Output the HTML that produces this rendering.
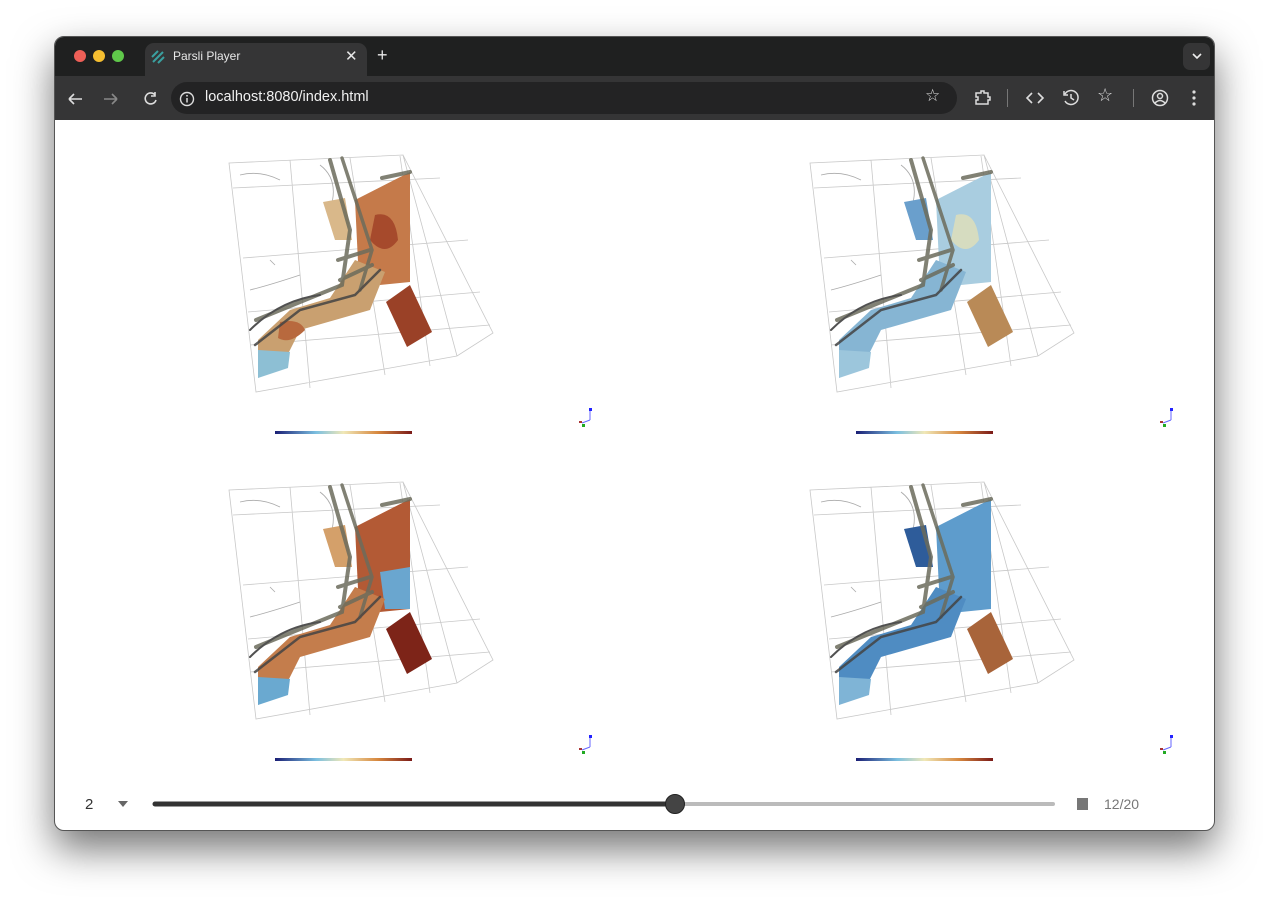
<!DOCTYPE html>
<html><head><meta charset="utf-8"><style>
body{margin:0;width:1269px;height:902px;background:#fff;font-family:"Liberation Sans",sans-serif;overflow:hidden;position:relative}
.win{position:absolute;left:54px;top:36px;width:1161px;height:795px;border-radius:10px;overflow:hidden;background:#fff;box-shadow:0 18px 40px rgba(0,0,0,.55);border:1px solid #555;box-sizing:border-box}
.tabs{position:absolute;left:0;top:0;width:100%;height:39px;background:#1f2020}
.tool{position:absolute;left:0;top:39px;width:100%;height:44px;background:#353536}
.dot{position:absolute;top:13px;width:12px;height:12px;border-radius:50%}
.tab{position:absolute;left:90px;top:6px;width:222px;height:33px;background:#353536;border-radius:9px 9px 0 0}
.url{position:absolute;left:116px;top:6px;width:786px;height:32px;background:#232324;border-radius:16px}
.t{position:absolute;color:#e8e8e8;font-size:13px}
</style></head><body>
<div class="win">
 <div class="tabs">
  <div class="dot" style="left:19px;background:#ee5f57"></div>
  <div class="dot" style="left:38px;background:#f5be30"></div>
  <div class="dot" style="left:57px;background:#5fc84a"></div>
  <div class="tab"></div>
  <svg style="position:absolute;left:95px;top:12px" width="16" height="16"><path d="M3 13 L13 3 M2 8 L8 2 M8 14 L14 8" stroke="#3aa0a0" stroke-width="2" fill="none"/></svg>
  <div class="t" style="left:118px;top:12px;font-size:12px">Parsli Player</div>
  <div class="t" style="left:290px;top:10px;font-size:15px">✕</div>
  <div class="t" style="left:322px;top:8px;font-size:18px">+</div>
  <div style="position:absolute;left:1128px;top:6px;width:27px;height:27px;border-radius:7px;background:#353536"></div>
  <svg style="position:absolute;left:1136px;top:14px" width="12" height="10"><path d="M2 3 L6 7 L10 3" stroke="#eee" stroke-width="1.6" fill="none"/></svg>
 </div>
 <div class="tool">
  <svg style="position:absolute;left:10px;top:12px" width="220" height="22" fill="none" stroke-width="1.6">
   <path d="M4 11 H17 M4 11 L9 6 M4 11 L9 16" stroke="#ddd"/>
   <path d="M39 11 H52 M52 11 L47 6 M52 11 L47 16" stroke="#888"/>
   <path d="M90 7 A5.5 5.5 0 1 0 91 12 M90 4 V8 H86" stroke="#ddd"/>
  </svg>
  <div class="url"></div>
  <svg style="position:absolute;left:124px;top:15px" width="16" height="16"><circle cx="8" cy="8" r="6.5" stroke="#ddd" stroke-width="1.4" fill="none"/><path d="M8 7 V11.5" stroke="#ddd" stroke-width="1.5"/><circle cx="8" cy="4.8" r=".9" fill="#ddd"/></svg>
  <div class="t" style="left:150px;top:13px;font-size:14.5px;color:#f0f0f0;font-weight:500">localhost:8080/index.html</div>
  <div class="t" style="left:870px;top:10px;font-size:17px;color:#ddd">☆</div>
  <svg style="position:absolute;left:918px;top:12px" width="20" height="20" fill="none" stroke="#ddd" stroke-width="1.5"><path d="M3 5 H8 V3 H11 V5 H15 V9 H17 V12 H15 V16 H3 V12 H5 V9 H3 Z"/></svg>
  <div style="position:absolute;left:952px;top:13px;width:1px;height:18px;background:#777"></div>
  <svg style="position:absolute;left:970px;top:13px" width="20" height="18" fill="none" stroke="#ddd" stroke-width="1.6"><path d="M7 4 L2 9 L7 14 M13 4 L18 9 L13 14"/></svg>
  <svg style="position:absolute;left:1006px;top:12px" width="20" height="20" fill="none" stroke="#ddd" stroke-width="1.5"><path d="M4 6 A7 7 0 1 1 4 13 M3 3 V7 H7 M10 6 V10 L13 12"/></svg>
  <div class="t" style="left:1042px;top:9px;font-size:18px;color:#ddd">☆</div>
  <div style="position:absolute;left:1078px;top:13px;width:1px;height:18px;background:#777"></div>
  <svg style="position:absolute;left:1095px;top:12px" width="20" height="20" fill="none" stroke="#ddd" stroke-width="1.5"><circle cx="10" cy="10" r="7.5"/><circle cx="10" cy="8" r="2.5"/><path d="M5 15 Q10 10 15 15"/></svg>
  <svg style="position:absolute;left:1136px;top:12px" width="6" height="20" fill="#ddd"><circle cx="3" cy="4" r="1.6"/><circle cx="3" cy="10" r="1.6"/><circle cx="3" cy="16" r="1.6"/></svg>
 </div>
</div>
<svg style="position:absolute;left:0;top:0" width="1269" height="902">
<defs>
<linearGradient id="cb"><stop offset="0" stop-color="#1a1f75"/><stop offset=".3" stop-color="#7bbfe0"/><stop offset=".5" stop-color="#f0e8b8"/><stop offset=".75" stop-color="#d7883f"/><stop offset="1" stop-color="#7a1a18"/></linearGradient>
<g id="frame">
 <g fill="none" stroke="#c8c8c8" stroke-width="0.8">
  <path d="M229 163 L403 155 L493 333 L457 356 L256 392 Z M229 163 L256 392 M403 155 L457 356 M233 188 L440 178 M243 258 L468 240 M248 312 L480 292 M250 345 L490 325 M290 160 L310 388 M350 158 L385 375 M400 156 L430 366"/>
 </g>
 <path d="M240 175 Q260 170 280 180 M320 165 Q340 180 330 210 M270 260 L275 265 M250 290 Q270 285 300 275" stroke="#aaa" stroke-width=".8" fill="none"/>
 <rect x="275" y="431" width="137" height="3" fill="url(#cb)"/>
 <path d="M590 420 V410 M590 420 L582 423" stroke="#66f" stroke-width="1"/>
 <rect x="589" y="408" width="3" height="3" fill="#22f"/><rect x="582" y="424" width="3" height="3" fill="#2a2"/><rect x="579" y="421" width="3" height="2" fill="#a33"/>
</g>
<g id="bands" fill="none" stroke="#6c6c5c" stroke-linecap="round" opacity=".85">
 <path d="M330 160 L350 230 L342 285 L305 300 L256 320" stroke-width="4"/>
 <path d="M342 158 L372 250 L360 290" stroke-width="3.5"/>
 <path d="M382 178 L410 172" stroke-width="4"/>
 <path d="M255 345 L300 310 L355 295 L380 270" stroke-width="2.5" stroke="#444"/>
 <path d="M338 260 L370 250 M340 280 L372 265" stroke-width="4"/>
 <path d="M250 330 Q280 300 320 295" stroke-width="2" stroke="#333"/>
</g>
</defs>
<g>
 <use href="#frame"/>
 <path d="M355 200 L410 172 L410 282 L380 285 L358 262 Z" fill="#c57a4a"/>
 <path d="M375 215 Q395 210 398 240 Q385 258 370 240 Z" fill="#a64a2c"/>
 <path d="M323 202 L345 198 L352 240 L335 240 Z" fill="#d9b88a"/>
 <path d="M355 260 L385 272 L370 310 L300 330 L285 360 L258 378 L258 340 L290 310 L330 298 Z" fill="#c9a070"/>
 <path d="M280 322 Q300 318 305 330 Q290 345 278 338 Z" fill="#b8693e"/>
 <path d="M258 350 L290 352 L288 368 L258 378 Z" fill="#8dbfd4"/>
 <path d="M386 302 L410 285 L432 332 L407 347 Z" fill="#9a4127"/>
 <use href="#bands"/>
</g>
<g transform="translate(581,0)">
 <use href="#frame"/>
 <path d="M355 200 L410 172 L410 282 L380 285 L358 262 Z" fill="#a9cde0"/>
 <path d="M375 215 Q395 210 398 240 Q385 258 370 240 Z" fill="#d6dcc0"/>
 <path d="M323 202 L345 198 L352 240 L335 240 Z" fill="#6a9fcc"/>
 <path d="M355 260 L385 272 L370 310 L300 330 L285 360 L258 378 L258 340 L290 310 L330 298 Z" fill="#86b5d3"/>
 <path d="M258 350 L290 352 L288 368 L258 378 Z" fill="#9cc6dc"/>
 <path d="M386 302 L410 285 L432 332 L407 347 Z" fill="#b98a57"/>
 <use href="#bands"/>
</g>
<g transform="translate(0,327)">
 <use href="#frame"/>
 <path d="M355 200 L410 172 L410 282 L380 285 L358 262 Z" fill="#b35a35"/>
 <path d="M380 245 L410 240 L410 282 L385 282 Z" fill="#6aa6cf"/>
 <path d="M323 202 L345 198 L352 240 L335 240 Z" fill="#d4a06a"/>
 <path d="M355 260 L385 272 L370 310 L300 330 L285 360 L258 378 L258 340 L290 310 L330 298 Z" fill="#c47d4c"/>
 <path d="M258 350 L290 352 L288 368 L258 378 Z" fill="#6aa9d0"/>
 <path d="M386 302 L410 285 L432 332 L407 347 Z" fill="#7d2418"/>
 <use href="#bands"/>
</g>
<g transform="translate(581,327)">
 <use href="#frame"/>
 <path d="M355 200 L410 172 L410 282 L380 285 L358 262 Z" fill="#5e9ccc"/>
 <path d="M323 202 L345 198 L352 240 L335 240 Z" fill="#2e5c9a"/>
 <path d="M355 260 L385 272 L370 310 L300 330 L285 360 L258 378 L258 340 L290 310 L330 298 Z" fill="#4f8cc2"/>
 <path d="M258 350 L290 352 L288 368 L258 378 Z" fill="#7fb4d6"/>
 <path d="M386 302 L410 285 L432 332 L407 347 Z" fill="#a8643a"/>
 <use href="#bands"/>
</g>
<text x="85" y="809" font-family="Liberation Sans" font-size="15" fill="#333">2</text>
<path d="M118 801 L128 801 L123 807 Z" fill="#666"/>
<line x1="155" y1="804" x2="1053" y2="804" stroke="#bbb" stroke-width="4" stroke-linecap="round"/>
<line x1="155" y1="804" x2="675" y2="804" stroke="#333" stroke-width="5" stroke-linecap="round"/>
<circle cx="675" cy="804" r="9.5" fill="#444" stroke="#222"/>
<rect x="1077" y="798" width="11" height="12" fill="#777"/>
<text x="1104" y="809" font-family="Liberation Sans" font-size="14" fill="#777">12/20</text>
</svg>
</body></html>
